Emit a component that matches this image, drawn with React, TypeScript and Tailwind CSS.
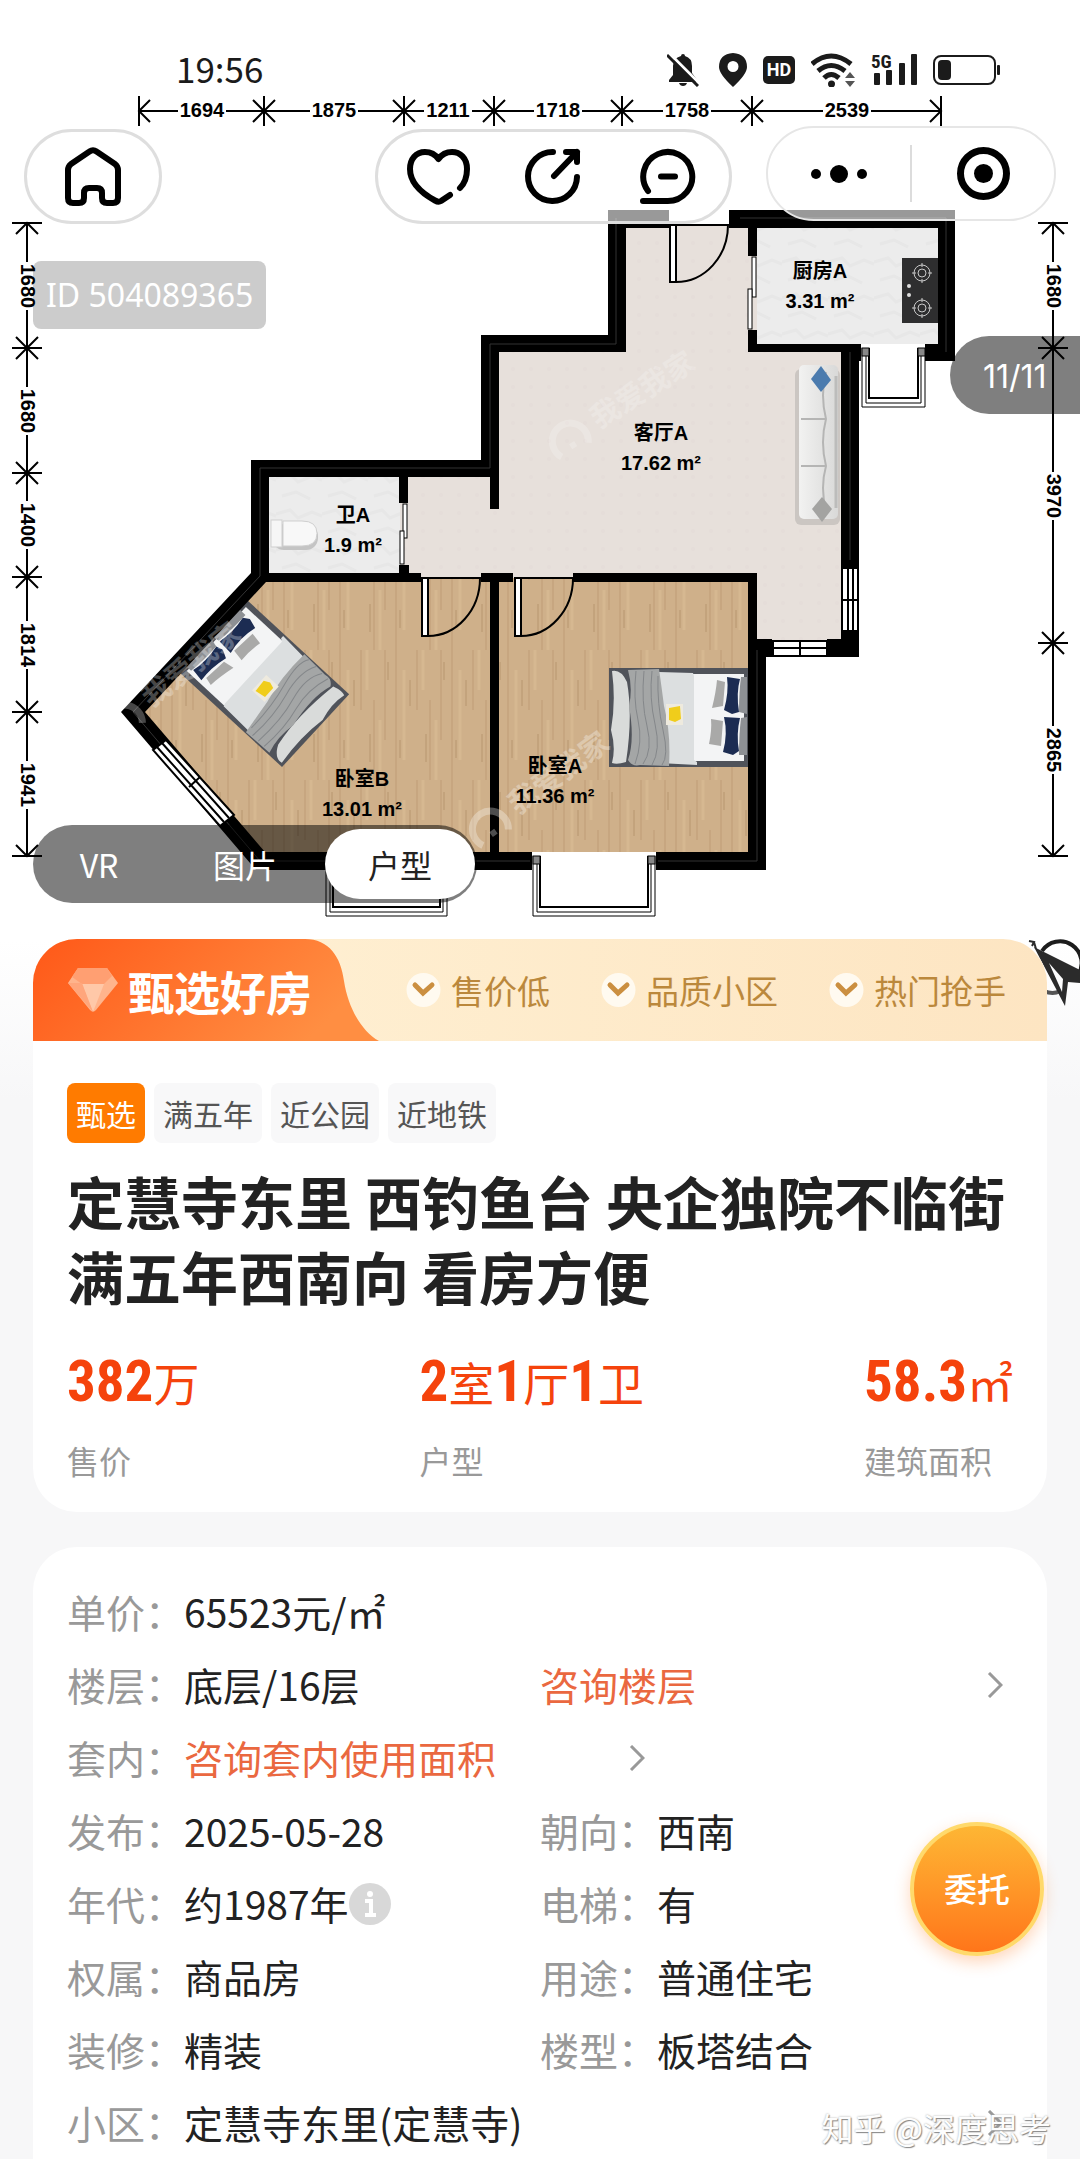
import type { ReactNode } from "react";

const widthDimensions = {
  ticks: [139, 264, 404, 494, 622, 752, 941],
  labels: [
    { at: 202, text: "1694" },
    { at: 334, text: "1875" },
    { at: 448, text: "1211" },
    { at: 558, text: "1718" },
    { at: 687, text: "1758" },
    { at: 847, text: "2539" },
  ],
};

const leftDimensions = {
  ticks: [223, 348, 473, 577, 712, 856],
  labels: [
    { at: 286, text: "1680" },
    { at: 411, text: "1680" },
    { at: 525, text: "1400" },
    { at: 645, text: "1814" },
    { at: 785, text: "1941" },
  ],
};

const rightDimensions = {
  ticks: [223, 348, 643, 856],
  labels: [
    { at: 286, text: "1680" },
    { at: 496, text: "3970" },
    { at: 750, text: "2865" },
  ],
};

const rooms = [
  { name: "厨房A", area: "3.31 m²", x: 820, y: 278 },
  { name: "客厅A", area: "17.62 m²", x: 661, y: 440 },
  { name: "卫A", area: "1.9 m²", x: 353, y: 522 },
  { name: "卧室B", area: "13.01 m²", x: 362, y: 786 },
  { name: "卧室A", area: "11.36 m²", x: 555, y: 773 },
];

const highlights = ["售价低", "品质小区", "热门抢手"];
const tags = ["满五年", "近公园", "近地铁"];

type Dimension = { ticks: number[]; labels: { at: number; text: string }[] };

/* Dimension line drawn left to right; vertical ones are turned by 90 degrees */
function DimensionLine({ ticks, labels }: Dimension) {
  const last = ticks.length - 1;
  return (
    <g>
      {ticks.slice(0, -1).map((tick, i) => (
        <g key={tick} stroke="#000" strokeWidth="2">
          <line x1={tick} y1="0" x2={labels[i].at - 24} y2="0" />
          <line x1={labels[i].at + 24} y1="0" x2={ticks[i + 1]} y2="0" />
        </g>
      ))}
      {ticks.map((tick, i) => (
        <g key={tick} stroke="#000" strokeWidth="2" fill="none">
          <line x1={tick} y1="-15" x2={tick} y2="15" />
          {i < last && <path d={`M${tick + 11} -11L${tick} 0L${tick + 11} 11`} />}
          {i > 0 && <path d={`M${tick - 11} -11L${tick} 0L${tick - 11} 11`} />}
        </g>
      ))}
      {labels.map((label) => (
        <text key={label.at} x={label.at} y="6" textAnchor="middle" fontSize="20" fontWeight="700">
          {label.text}
        </text>
      ))}
    </g>
  );
}

/* Bed with its head at the right side */
function Bed({ transform }: { transform: string }) {
  return (
    <g transform={transform}>
      <rect width="139" height="99" fill="#50535a" />
      <path d="M84 6H135V93H84Z" fill="#f3f4f5" />
      <path d="M50 4L84 5L85 8V92L88 94V97L50 95Z" fill="#dcdfe0" />
      <path d="M3 3Q12 1 18 14Q24 48 17 94Q8 97 3 95Q7 80 2 62Q7 34 3 3Z" fill="#d9dbda" />
      <path d="M19 2L50 1Q53 22 55 38Q62 65 60 98L31 97Q23 99 19 92Q26 72 20 38Q24 20 19 2Z" fill="#a4a6a6" />
      <g fill="none" stroke="#84878a" strokeWidth="1">
        <path d="M27 3Q24 30 29 52T26 96" />
        <path d="M35 3Q32 34 38 58T34 96" />
        <path d="M43 3Q40 30 46 56T43 97" />
        <path d="M49 8Q48 36 54 62T53 97" />
      </g>
      <path d="M108 12L116 14L114 38L103 40Q107 24 108 12Z" fill="#a9a9a8" />
      <path d="M102 51L114 53L112 78L100 76Q103 62 102 51Z" fill="#a9a9a8" />
      <path d="M118 9L131 11Q127 25 130 44L123 46L115 42Q120 24 118 9Z" fill="#1c2c52" />
      <path d="M115 49L131 50Q127 66 130 83L124 87L114 84Q119 66 115 49Z" fill="#1c2c52" />
      <path d="M132 9H138V46L130 44Q130 24 132 9Z" fill="#8d9094" />
      <path d="M132 50L138 49V87H130Q130 66 132 50Z" fill="#8d9094" />
      <rect x="57" y="36" width="17" height="21" fill="#eeeade" />
      <path d="M60 40L71 38L72 51L66 54L60 52Z" fill="#f0cd1b" />
    </g>
  );
}

function Brand({ transform, opacity }: { transform: string; opacity: number }) {
  return (
    <g transform={transform} opacity={opacity}>
      <path d="M-16 10A18 18 0 1 1 14 12" fill="none" stroke="#fff" strokeWidth="7" />
      <rect x="-3" y="3" width="6" height="6" fill="#fff" />
      <text x="30" y="6" fontSize="29" fontWeight="700" fill="#fff">
        我爱我家
      </text>
    </g>
  );
}

function BayWindow({ x, y, width, height }: { x: number; y: number; width: number; height: number }) {
  const right = x + width;
  const bottom = y + height;
  return (
    <g>
      <rect x={x} y={y} width={width} height={height} fill="#fff" />
      <g fill="none" stroke="#000">
        <path d={`M${x} ${y + 4}V${bottom}H${right}V${y + 4}`} strokeWidth="1" />
        <path d={`M${x + 4} ${y + 4}V${bottom - 4}H${right - 4}V${y + 4}`} strokeWidth="1" />
        <path d={`M${x + 7} ${y + 4}V${bottom - 9}H${right - 7}V${y + 4}`} strokeWidth="2" />
      </g>
      <rect x={x} y={y + 4} width="7" height="8" fill="#888" stroke="#000" />
      <rect x={right - 7} y={y + 4} width="7" height="8" fill="#888" stroke="#000" />
    </g>
  );
}

function Door({ x, y, width, height }: { x: number; y: number; width: number; height: number }) {
  return (
    <g fill="none" stroke="#000" strokeWidth="2">
      <path d={`M${x} ${y}H${x + width}A${width - 7} ${height} 0 0 1 ${x + 7} ${y + height}`} />
      <rect x={x + 1} y={y} width="6" height={height} fill="#fff" />
    </g>
  );
}

function FloorPlan() {
  return (
    <svg
      viewBox="0 0 1080 1010"
      role="img"
      aria-label="户型图"
      className="col-start-1 row-start-1 block w-full font-['Liberation_Sans','Noto_Sans_CJK_SC',sans-serif]"
    >
      <defs>
        <pattern id="wood" width="56" height="130" patternUnits="userSpaceOnUse">
          <rect width="56" height="130" fill="#cfb08a" />
          <path d="M4 0V130M25 0V60M38 50V130M49 0V90" stroke="#c7a680" strokeWidth="2" />
          <path d="M12 20V110M31 0V40M44 70V130" stroke="#d6b891" strokeWidth="3" />
          <path d="M18 30V56M34 84V112M8 90V108M52 12V30" stroke="#b8966f" strokeWidth="1" />
        </pattern>
        <pattern id="tile" width="18" height="18" patternUnits="userSpaceOnUse">
          <rect width="18" height="18" fill="#e7e0db" />
          <circle cx="9" cy="9" r="2" fill="#e5ddd9" />
        </pattern>
        <pattern id="marble" width="46" height="36" patternUnits="userSpaceOnUse">
          <rect width="46" height="36" fill="#ececec" />
          <path d="M0 10L14 6L22 14L36 8L46 12M6 28L20 24L34 31" stroke="#e7e7e7" strokeWidth="3" fill="none" />
        </pattern>
        <linearGradient id="sofa" x1="0" x2="1">
          <stop offset="0" stopColor="#f2f2f1" />
          <stop offset="1" stopColor="#d9d9d8" />
        </linearGradient>
      </defs>

      {/* Dimensions */}
      <g transform="translate(0 111)">
        <DimensionLine {...widthDimensions} />
      </g>
      <g transform="translate(27 0) rotate(90)">
        <DimensionLine {...leftDimensions} />
      </g>
      <g transform="translate(1053 0) rotate(90)">
        <DimensionLine {...rightDimensions} />
      </g>

      {/* Floors */}
      <path d="M626 226H757V344H841V640H757V582H400V477H498V352H626Z" fill="url(#tile)" />
      <rect x="757" y="227" width="181" height="117" fill="url(#marble)" />
      <rect x="269" y="477" width="131" height="96" fill="url(#marble)" />
      <path d="M263 578H748V852H262L143 712Z" fill="url(#wood)" />

      {/* Furniture */}
      <Bed transform="translate(282 767) rotate(222.7)" />
      <Bed transform="translate(609 668)" />
      <rect x="795" y="369" width="45" height="156" rx="6" fill="#b9b4b0" opacity="0.6" />
      <rect x="799" y="365" width="39" height="154" rx="5" fill="url(#sofa)" />
      <path d="M801 419H826M801 466H826M826 372Q820 395 826 419Q820 442 826 466Q820 488 826 510" fill="none" stroke="#b5b5b4" strokeWidth="2" />
      <path d="M836 376V508" stroke="#bcbcbb" strokeWidth="3" />
      <path d="M821 366L831 380L821 392L811 379Z" fill="#4b7bae" />
      <path d="M822 497L832 509L822 522L812 509Z" fill="#a3a3a1" />
      <rect x="272" y="524" width="46" height="26" rx="12" fill="#c4c4c4" />
      <rect x="271" y="520" width="11" height="27" fill="#f6f6f6" stroke="#cfcfcf" />
      <path d="M283 521H302Q317 521 317 533.5Q317 546 302 546H283Z" fill="#f8f8f8" stroke="#cfcfcf" />
      <rect x="902" y="258" width="36" height="65" fill="#2e2e2f" />
      {[273, 308].map((cy) => (
        <g key={cy} fill="none" stroke="#c9c9c9" strokeWidth="1">
          <circle cx="922" cy={cy} r="8" />
          <circle cx="922" cy={cy} r="4" />
          <path d={`M922 ${cy - 10}V${cy - 6}M922 ${cy + 6}V${cy + 10}M912 ${cy}H916M928 ${cy}H932`} />
        </g>
      ))}
      <circle cx="909" cy="286" r="2" fill="#ddd" />
      <circle cx="909" cy="295" r="2" fill="#ddd" />

      {/* Walls */}
      <g fill="#000">
        <path d="M608 210H669V228H626V352H499V509H490V477H408V503H399V477H269V573H421V582H266L145 712L265 852H532V870H256L121 712L251 573V460H481V335H608Z" />
        <path d="M729 210H955V361H925V344H938V228H757V256H748V228H729Z" />
        <path d="M748 330H757V344H861V361H859V567H841V352H748Z" />
        <path d="M399 565H409V573H399ZM481 573H513V582H499V852H490V582H481Z" />
        <path d="M573 573H757V639H772V657H766V870H656V852H748V582H573Z" />
        <path d="M827 639H841V632H859V657H827Z" />
      </g>
      <path d="M616 218V344H490V468H260V576L133 712L260 861H530M740 218H946V352M850 352V560M658 861H757V650" fill="none" stroke="#333" strokeWidth="1" />

      {/* Doors */}
      <Door x={669} y={225} width={59} height={57} />
      <Door x={421} y={578} width={59} height={58} />
      <Door x={514} y={578} width={59} height={58} />
      <g fill="#fff" stroke="#000" strokeWidth="1">
        <rect x="752" y="257" width="4" height="40" />
        <rect x="748" y="289" width="4" height="40" />
        <rect x="403" y="504" width="4" height="34" />
        <rect x="400" y="531" width="4" height="33" />
      </g>

      {/* Windows */}
      <BayWindow x={862} y={344} width={63} height={63} />
      <BayWindow x={326} y={852} width={121} height={64} />
      <rect x="326" y="852" width="121" height="18" fill="#000" />
      <BayWindow x={533} y={852} width={122} height={64} />
      <g fill="#fff" stroke="#000" strokeWidth="2">
        <path d="M153 750L166 740L234 815L220 826Z" />
        <path d="M157 747L224 822M162 743L229 818M189 787L200 777" fill="none" />
        <rect x="773" y="641" width="54" height="15" />
        <path d="M773 648H827M800 641V656" />
        <rect x="842" y="568" width="16" height="63" />
        <path d="M848 568V631M853 568V631M842 600H858" />
      </g>

      {/* Brand marks */}
      <Brand transform="translate(570 440) rotate(-32)" opacity={0.2} />
      <Brand transform="translate(124 722) rotate(-38)" opacity={0.28} />
      <Brand transform="translate(490 828) rotate(-36)" opacity={0.3} />

      {/* Room names */}
      {rooms.map((room) => (
        <g key={room.name} fontSize="20" fontWeight="700" textAnchor="middle">
          <text x={room.x} y={room.y}>{room.name}</text>
          <text x={room.x} y={room.y + 30}>{room.area}</text>
        </g>
      ))}

      {/* Compass */}
      <g fill="#2b2b2b">
        <path d="M1042 951A21 21 0 0 1 1078 975" fill="none" stroke="#1c1c1c" strokeWidth="4" />
        <path d="M1044 991Q1053 995 1060 991" fill="none" stroke="#555" strokeWidth="4" />
        <path fillRule="evenodd" d="M1034 947L1080 970V983L1068 982L1065 1006ZM1049 963L1062 992L1063 979Z" />
        <path d="M1029 941L1034 942L1032 946M1034 942L1036 949" fill="none" stroke="#2b2b2b" strokeWidth="2" />
      </g>
    </svg>
  );
}

function StatusBar() {
  return (
    <div className="mt-12 flex h-11 items-center justify-between pl-[176px] pr-20 text-[#1b1b1b]">
      <span className="pb-[6px] text-[35px] leading-none">19:56</span>
      <div className="flex items-center gap-4">
        <svg className="mr-1 h-[34px] w-8" viewBox="0 0 32 34" fill="currentColor" aria-hidden="true">
          <path d="M16 1Q18 1 18 3Q25 5 25 13V20L30 27V29H2V27L6 22V13Q6 5 14 3Q14 1 16 1Z" />
          <path d="M12 30H20Q19 33 16 33T12 30Z" />
          <path d="M2 0L33 31" stroke="#fff" strokeWidth="3" />
          <path d="M0 2L31 33" stroke="currentColor" strokeWidth="3" />
        </svg>
        <svg className="h-[34px] w-7" viewBox="0 0 28 34" fill="currentColor" aria-hidden="true">
          <path fillRule="evenodd" d="M14 0Q28 1 28 14Q28 21 14 34Q0 21 0 14Q0 1 14 0ZM14 8A5.5 5.5 0 1 0 14 19A5.5 5.5 0 1 0 14 8Z" />
        </svg>
        <span className="flex h-7 w-8 items-center justify-center rounded-[5px] bg-[#1b1b1b] font-['Roboto',sans-serif] text-[18px] font-bold leading-none text-white">
          HD
        </span>
        <svg className="h-[34px] w-11" viewBox="0 0 44 34" fill="none" stroke="currentColor" strokeWidth="5" aria-hidden="true">
          <path d="M1 11Q20 -5 40 11M7 18Q20 7 34 18M13 25Q20 18 28 25" />
          <circle cx="20.500" cy="31" r="3.500" fill="currentColor" stroke="none" />
          <path d="M34 25L39 19L44 25ZM34 28L39 34L44 28Z" fill="#555" stroke="none" />
        </svg>
        <svg className="h-[34px] w-[46px] overflow-visible" viewBox="0 0 46 34" fill="currentColor" aria-hidden="true">
          <text x="0" y="15" fontSize="19" fontWeight="700" className="font-['Roboto_Condensed','Roboto',sans-serif]">5G</text>
          <rect x="3" y="20" width="6" height="12" rx="1" />
          <rect x="15" y="17" width="6" height="15" rx="1" />
          <rect x="28" y="10" width="6" height="22" rx="1" />
          <rect x="40" y="1" width="6" height="31" rx="1" />
        </svg>
        <svg className="h-[34px] w-[67px]" viewBox="0 0 67 34" fill="currentColor" aria-hidden="true">
          <rect x="1" y="3" width="61" height="28" rx="7" fill="none" stroke="currentColor" strokeWidth="2" />
          <rect x="5" y="7" width="13" height="20" rx="4" />
          <rect x="64" y="12" width="3" height="10" rx="1" />
        </svg>
      </div>
    </div>
  );
}

function IconButton({ label, viewBox, children }: { label: string; viewBox: string; children: ReactNode }) {
  return (
    <button type="button" aria-label={label} className="flex h-full flex-1 items-center justify-center">
      <svg className="h-[60px] w-[64px]" viewBox={viewBox} fill="none" stroke="#000" strokeWidth="6" strokeLinecap="round" strokeLinejoin="round">
        {children}
      </svg>
    </button>
  );
}

function NavBar() {
  return (
    <nav className="mt-[34px] flex items-start px-6">
      <div className="mt-[3px] flex h-[95px] w-[138px] rounded-full border-[3px] border-[#dedede] bg-white/60">
        <IconButton label="首页" viewBox="-4 0 64 60">
          <path d="M24.500 4.500Q28 2 31.500 4.500L50 17Q53 19.500 53 23V51Q53 56 48 56H42Q37 56 37 51V46Q37 41 32 41H24Q19 41 19 46V51Q19 56 14 56H8Q3 56 3 51V23Q3 19.500 6 17Z" />
        </IconButton>
      </div>
      <div className="ml-auto mt-[3px] flex h-[95px] w-[357px] rounded-full border-[3px] border-[#dedede] bg-white/60 px-1">
        <IconButton label="收藏" viewBox="0 -2 64 60">
          <path d="M53 39C58 34 60 26 60 20C60 9 53 3 45 3C39 3 35 5 31.500 10C28 5 24 3 18 3C9 3 3 10 3 20C3 36 18 46 28 51.500Q31.500 53.500 34 52L43 46" />
        </IconButton>
        <IconButton label="分享" viewBox="-4 -2 64 60">
          <path d="M28 3A24.500 24.500 0 1 0 52 28" />
          <path d="M29 27L52 3M41 3H52V13" />
        </IconButton>
        <IconButton label="咨询" viewBox="-4 -2 64 60">
          <path d="M8 42A24.500 24.500 0 1 1 27.500 52H3" />
          <path d="M21 27.500H35" />
        </IconButton>
      </div>
      <div className="ml-[34px] flex h-[95px] w-[290px] items-center rounded-full border-2 border-[#e6e6e6] bg-white/60">
        <button type="button" aria-label="更多" className="flex h-full flex-1 items-center justify-center gap-[9px]">
          <span className="size-[10px] rounded-full bg-black" />
          <span className="size-[18px] rounded-full bg-black" />
          <span className="size-[10px] rounded-full bg-black" />
        </button>
        <span className="h-[57px] w-[2px] bg-[#dcdcdc]" />
        <button type="button" aria-label="关闭" className="flex h-full flex-1 items-center justify-center">
          <span className="flex size-[53px] items-center justify-center rounded-full border-[7px] border-black">
            <span className="size-[19px] rounded-full bg-black" />
          </span>
        </button>
      </div>
    </nav>
  );
}

function Chevron() {
  return (
    <svg className="h-[26px] w-4 shrink-0" viewBox="0 0 16 26" fill="none" stroke="#999" strokeWidth="3" aria-hidden="true">
      <path d="M2 1L14 13L2 25" />
    </svg>
  );
}

function SelectedBanner() {
  return (
    <div className="flex h-[102px] items-center overflow-hidden rounded-t-[44px] bg-gradient-to-r from-[#fff2d6] to-[#fde5c2]">
      <div className="grid h-full w-[346px] shrink-0">
        <svg className="col-start-1 row-start-1 h-full w-full" viewBox="0 0 346 102" aria-hidden="true">
          <defs>
            <linearGradient id="banner" x1="0" x2="1" y1="0" y2="0.300">
              <stop offset="0" stopColor="#ff5818" />
              <stop offset="1" stopColor="#ff8e42" />
            </linearGradient>
          </defs>
          <path d="M0 0H272C296 0 308 18 311 42C315 68 328 92 346 102H0Z" fill="url(#banner)" />
        </svg>
        <div className="col-start-1 row-start-1 flex items-center gap-[10px] pl-[35px]">
          <svg className="h-11 w-[50px]" viewBox="0 0 50 44" aria-hidden="true">
            <path d="M10 0H39L50 15L28 42Q25 45 22 42L0 15Z" fill="#ffb48c" />
            <path d="M10 0H39L44 8L36 16H14L4 9Z" fill="#ff9f72" />
            <path d="M14 16H36L25 44Z" fill="#ffc8a8" />
            <path d="M0 15H14L25 44Z" fill="#ffa67c" />
          </svg>
          <span className="text-[46px] font-bold leading-none text-white">甄选好房</span>
        </div>
      </div>
      <ul className="flex flex-1 justify-end gap-[51px] pr-[41px]">
        {highlights.map((item) => (
          <li key={item} className="flex items-center gap-[10px] text-[33px] leading-none text-[#bb883c]">
            <svg className="size-[35px]" viewBox="0 0 35 35" aria-hidden="true">
              <circle cx="17.500" cy="17" r="17" fill="#fffaf0" />
              <path d="M9 12L17 20L26 12" fill="none" stroke="#cb8f40" strokeWidth="5" strokeLinecap="round" />
            </svg>
            {item}
          </li>
        ))}
      </ul>
    </div>
  );
}

function Num({ children }: { children: ReactNode }) {
  return <span className="font-['Roboto_Condensed','Roboto',sans-serif] text-[57px] font-bold">{children}</span>;
}

function Stat({ label, children }: { label: string; children: ReactNode }) {
  return (
    <div className="flex flex-col">
      <dd className="order-first flex h-[70px] items-baseline text-[46px] leading-[70px] text-[#f5430c]">{children}</dd>
      <dt className="mt-5 text-[32px] leading-[48px] text-[#999]">{label}</dt>
    </div>
  );
}

function Field({ label, wide, children }: { label: string; wide?: boolean; children: ReactNode }) {
  return (
    <div className={wide ? "col-span-2 flex h-[73px] items-center" : "flex h-[73px] items-center"}>
      <dt className="shrink-0 text-[#999]">{label}：</dt>
      <dd className="flex flex-1 items-center">{children}</dd>
    </div>
  );
}

export default function App() {
  return (
    <div className="min-h-screen bg-[linear-gradient(to_bottom,#fff_940px,#f7f7f8_1100px)] font-['Noto_Sans_CJK_SC',sans-serif] text-[#222]">
      {/* Floor plan gallery */}
      <header className="grid">
        <FloorPlan />
        <div className="col-start-1 row-start-1 flex flex-col">
          <StatusBar />
          <NavBar />
          <div className="ml-[33px] mt-[37px] flex h-[68px] items-center self-start rounded-lg bg-black/20 px-[13px] font-['Noto_Sans',sans-serif] text-[32px] leading-none text-white">
            ID 504089365
          </div>
          <div className="mt-[7px] flex h-[78px] w-[130px] items-center self-end rounded-l-full bg-black/50 pl-[33px] pt-1 font-['Inter',sans-serif] text-[32px] leading-none text-white">
            11/11
          </div>
          <div className="mb-[107px] ml-[33px] mt-auto flex h-[78px] items-center self-start rounded-full bg-black/50 pr-[2px] text-[32px] leading-none text-white">
            <button type="button" className="h-full w-[132px]">VR</button>
            <button type="button" className="h-full w-[160px]">图片</button>
            <button type="button" className="h-[70px] w-[150px] rounded-full bg-white text-[#222]">户型</button>
          </div>
        </div>
      </header>

      <main className="relative -mt-[71px] flex flex-col gap-[35px] px-[33px]">
        {/* Summary */}
        <section className="rounded-[44px] bg-white pb-[28px]">
          <SelectedBanner />
          <div className="px-[34px] pt-[42px]">
            <ul className="flex gap-[9px] text-[30px] leading-[60px]">
              <li className="rounded-lg bg-[#ff7b00] px-[9px] text-white">甄选</li>
              {tags.map((tag) => (
                <li key={tag} className="rounded-lg bg-[#f8f8f9] px-[9px] text-[#555]">{tag}</li>
              ))}
            </ul>
            <h1 className="mt-5 text-[57px] font-bold leading-[75px]">
              定慧寺东里 西钓鱼台 央企独院不临街满五年西南向 看房方便
            </h1>
            <dl className="mt-[33px] flex justify-between">
              <Stat label="售价">
                <Num>382</Num>万
              </Stat>
              <Stat label="户型">
                <Num>2</Num>室<Num>1</Num>厅<Num>1</Num>卫
              </Stat>
              <Stat label="建筑面积">
                <Num>58.3</Num>㎡
              </Stat>
            </dl>
          </div>
        </section>

        {/* Details */}
        <section className="relative rounded-t-[44px] bg-white px-[34px] pt-[28px]">
          <dl className="grid grid-cols-2 text-[39px] leading-none">
            <Field label="单价" wide>65523元/㎡</Field>
            <Field label="楼层">底层/16层</Field>
            <div className="flex items-center">
              <a href="#floor" className="flex flex-1 items-center justify-between pr-[10px] text-[#ea6840]">
                咨询楼层
                <Chevron />
              </a>
            </div>
            <Field label="套内" wide>
              <a href="#area" className="flex w-[461px] items-center justify-between text-[#ea6840]">
                咨询套内使用面积
                <Chevron />
              </a>
            </Field>
            <Field label="发布">2025-05-28</Field>
            <Field label="朝向">西南</Field>
            <Field label="年代">
              约1987年
              <button type="button" aria-label="年代说明">
                <svg className="size-[42px]" viewBox="0 0 42 42" aria-hidden="true">
                  <circle cx="21" cy="21" r="21" fill="#d8d8d8" />
                  <circle cx="21" cy="11" r="3" fill="#fff" />
                  <path d="M16 18H22V32M16 32H27" fill="none" stroke="#fff" strokeWidth="4" />
                </svg>
              </button>
            </Field>
            <Field label="电梯">有</Field>
            <Field label="权属">商品房</Field>
            <Field label="用途">普通住宅</Field>
            <Field label="装修">精装</Field>
            <Field label="楼型">板塔结合</Field>
            <Field label="小区" wide>
              <a href="#community" className="flex flex-1 items-center justify-between pr-[10px]">
                定慧寺东里(定慧寺)
                <Chevron />
              </a>
            </Field>
          </dl>

          <button
            type="button"
            className="absolute right-[3px] top-[275px] size-[134px] rounded-full border-4 border-[#ffd96b] bg-gradient-to-b from-[#fdb634] to-[#ff751a] text-[33px] font-medium text-white shadow-[0_6px_16px_rgba(255,120,30,0.3)]"
          >
            委托
          </button>
          <span className="absolute -right-1 bottom-2 text-[32px] leading-[48px] text-[#fdfdfd] [text-shadow:1px_1px_1px_#888,0_0_2px_#aaa]">
            知乎 @深度思考
          </span>
        </section>
      </main>
      <footer className="h-4 bg-white" />
    </div>
  );
}
